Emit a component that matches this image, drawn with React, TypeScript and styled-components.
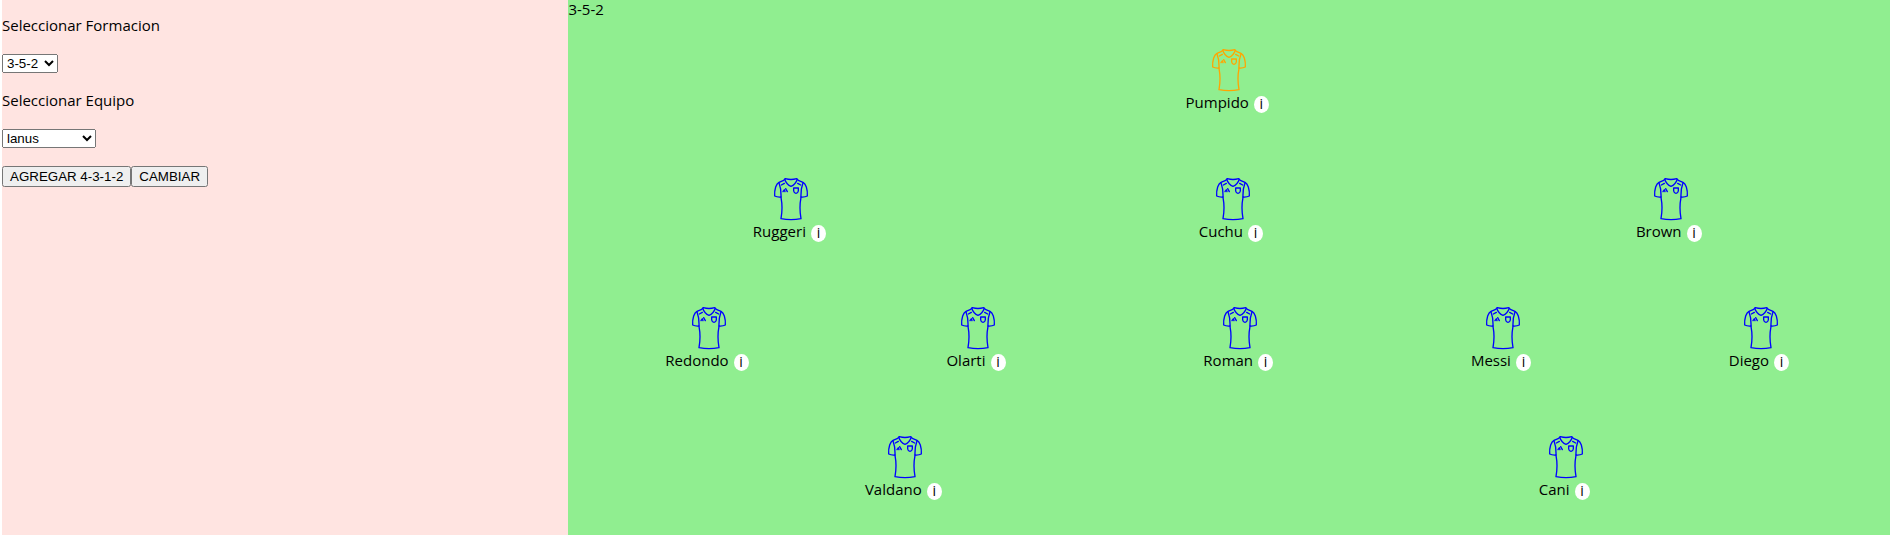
import React, { useState } from "react";
import styled, { createGlobalStyle } from "styled-components";

const GlobalStyle = createGlobalStyle`
  body {
    margin: 0;
    background: #ffffff;
    color: #000000;
    font-family: "Segoe UI", "Open Sans", "Noto Sans", sans-serif;
    font-size: 15px;
    line-height: 21px;
  }
`;

const Page = styled.div`
  display: flex;
  min-height: 100vh;
  padding-left: 2px;
  box-sizing: border-box;
`;

const Sidebar = styled.aside`
  flex: 3 1 0;
  background: mistyrose;
`;

const FieldLabel = styled.label`
  display: block;
  padding: 15px 0 18px;
`;

const SelectRow = styled.div`
  display: flex;
  align-items: flex-start;
  height: 21px;
`;

const Select = styled.select<{ $width: number }>`
  width: ${(p) => p.$width}px;
  height: 19px;
  font-family: "Liberation Sans", Arial, sans-serif;
`;

const Actions = styled.div`
  display: flex;
  margin-top: 16px;
`;

const Button = styled.button`
  height: 21px;
  padding: 1px 6px;
  font-family: "Liberation Sans", Arial, sans-serif;
`;

const Pitch = styled.main`
  flex: 7 1 0;
  display: flex;
  flex-direction: column;
  background: lightgreen;
`;

const FormationName = styled.div`
  line-height: 19px;
`;

const Line = styled.div`
  flex: 1;
  display: flex;
  justify-content: space-around;
  align-items: center;
  padding-bottom: 6px;
`;

const Player = styled.div`
  display: flex;
  flex-direction: column;
  align-items: center;
`;

const Shirt = styled.svg<{ $color: string }>`
  display: block;
  width: 36px;
  height: 44px;
  fill: none;
  stroke: ${(p) => p.$color};
  stroke-width: 4;
  stroke-linecap: round;
  stroke-linejoin: round;
`;

const Caption = styled.div`
  display: flex;
  align-items: center;
  gap: 5px;
  padding-right: 4px;
`;

const InfoButton = styled.button`
  width: 15px;
  height: 17px;
  margin-top: 3px;
  padding: 0 0 2px;
  border: 0;
  border-radius: 50%;
  background: #ffffff;
  color: #000000;
  font: inherit;
  font-size: 14px;
  line-height: 15px;
`;

const lines = [
  { color: "orange", players: ["Pumpido"] },
  { color: "blue", players: ["Ruggeri", "Cuchu", "Brown"] },
  { color: "blue", players: ["Redondo", "Olarti", "Roman", "Messi", "Diego"] },
  { color: "blue", players: ["Valdano", "Cani"] },
];

function ShirtIcon({ color }: { color: string }) {
  return (
    <Shirt $color={color} viewBox="0 0 108 132" aria-hidden="true">
      <path d="M37 5 Q54 10 71 5 L76 10 L90 16 Q96 19 100 30 Q104 43 103 57 Q95 61 84 60" />
      <path d="M37 5 L32 10 L18 16 Q12 19 8 30 Q4 43 5 57 Q13 61 24 60" />
      <path d="M18 17 Q25 36 24 61 Q30 92 24 125 Q54 131 84 125 Q78 92 84 61 Q83 36 90 17" />
      <path d="M35 7 Q41 24 54 28 Q67 24 73 7" />
      <path d="M25 24 L34 19 M74 19 L83 24" />
      <path d="M30 44 L32 41 M36 44 L34 38 M38 35 L43 44" />
      <path d="M62 33 H76 V42 Q75 48 69 49 Q63 48 62 42 Z" />
    </Shirt>
  );
}

export default function App() {
  const [formation, setFormation] = useState("3-5-2");
  const [team, setTeam] = useState("lanus");
  return (
    <>
      <GlobalStyle />
      <Page>
        <Sidebar>
          <FieldLabel htmlFor="formation">Seleccionar Formacion</FieldLabel>
          <SelectRow>
            <Select
              id="formation"
              $width={56}
              value={formation}
              onChange={(e) => setFormation(e.target.value)}
            >
              <option>3-5-2</option>
              <option>4-4-2</option>
              <option>4-3-3</option>
            </Select>
          </SelectRow>
          <FieldLabel htmlFor="team">Seleccionar Equipo</FieldLabel>
          <SelectRow>
            <Select
              id="team"
              $width={94}
              value={team}
              onChange={(e) => setTeam(e.target.value)}
            >
              <option>lanus</option>
              <option>argentina</option>
            </Select>
          </SelectRow>
          <Actions>
            <Button type="button">AGREGAR 4-3-1-2</Button>
            <Button type="button">CAMBIAR</Button>
          </Actions>
        </Sidebar>
        <Pitch>
          <FormationName>{formation}</FormationName>
          {lines.map((line, i) => (
            <Line key={i}>
              {line.players.map((name) => (
                <Player key={name}>
                  <ShirtIcon color={line.color} />
                  <Caption>
                    {name}
                    <InfoButton type="button" aria-label={`Info ${name}`}>
                      i
                    </InfoButton>
                  </Caption>
                </Player>
              ))}
            </Line>
          ))}
        </Pitch>
      </Page>
    </>
  );
}
